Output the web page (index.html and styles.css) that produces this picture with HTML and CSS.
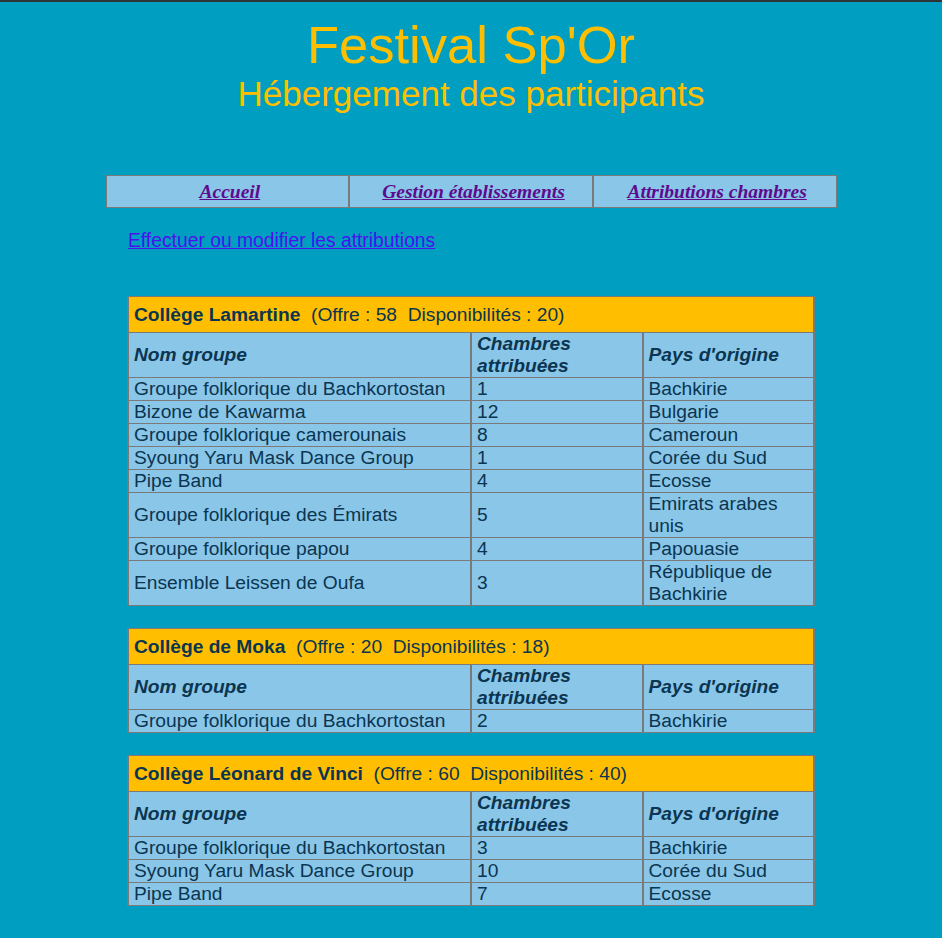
FILE: index.html
```html
<!DOCTYPE html>
<html lang="fr">
<head>
<meta charset="utf-8">
<title>Festival Sp'Or</title>
<link rel="stylesheet" href="styles.css">
</head>
<body>
<header class="entete">
  <h1 class="titre">Festival Sp'Or</h1>
  <p class="soustitre">Hébergement des participants</p>
</header>
<table class="menu">
  <tr>
    <td><a href="#">Accueil</a></td>
    <td><a href="#">Gestion établissements</a></td>
    <td><a href="#">Attributions chambres</a></td>
  </tr>
</table>
<main class="contenu">
  <p class="action"><a href="#">Effectuer ou modifier les attributions</a></p>

  <table class="etab">
    <colgroup><col class="c1"><col class="c2"><col class="c3"></colgroup>
    <tr><td colspan="3" class="nom"><strong>Collège Lamartine</strong>&nbsp;&nbsp;(Offre : 58&nbsp;&nbsp;Disponibilités : 20)</td></tr>
    <tr class="entetes"><th>Nom groupe</th><th>Chambres attribuées</th><th>Pays d'origine</th></tr>
    <tr><td>Groupe folklorique du Bachkortostan</td><td>1</td><td>Bachkirie</td></tr>
    <tr><td>Bizone de Kawarma</td><td>12</td><td>Bulgarie</td></tr>
    <tr><td>Groupe folklorique camerounais</td><td>8</td><td>Cameroun</td></tr>
    <tr><td>Syoung Yaru Mask Dance Group</td><td>1</td><td>Corée du Sud</td></tr>
    <tr><td>Pipe Band</td><td>4</td><td>Ecosse</td></tr>
    <tr><td>Groupe folklorique des Émirats</td><td>5</td><td>Emirats arabes unis</td></tr>
    <tr><td>Groupe folklorique papou</td><td>4</td><td>Papouasie</td></tr>
    <tr><td>Ensemble Leissen de Oufa</td><td>3</td><td>République de Bachkirie</td></tr>
  </table>

  <table class="etab">
    <colgroup><col class="c1"><col class="c2"><col class="c3"></colgroup>
    <tr><td colspan="3" class="nom"><strong>Collège de Moka</strong>&nbsp;&nbsp;(Offre : 20&nbsp;&nbsp;Disponibilités : 18)</td></tr>
    <tr class="entetes"><th>Nom groupe</th><th>Chambres attribuées</th><th>Pays d'origine</th></tr>
    <tr><td>Groupe folklorique du Bachkortostan</td><td>2</td><td>Bachkirie</td></tr>
  </table>

  <table class="etab">
    <colgroup><col class="c1"><col class="c2"><col class="c3"></colgroup>
    <tr><td colspan="3" class="nom"><strong>Collège Léonard de Vinci</strong>&nbsp;&nbsp;(Offre : 60&nbsp;&nbsp;Disponibilités : 40)</td></tr>
    <tr class="entetes"><th>Nom groupe</th><th>Chambres attribuées</th><th>Pays d'origine</th></tr>
    <tr><td>Groupe folklorique du Bachkortostan</td><td>3</td><td>Bachkirie</td></tr>
    <tr><td>Syoung Yaru Mask Dance Group</td><td>10</td><td>Corée du Sud</td></tr>
    <tr><td>Pipe Band</td><td>7</td><td>Ecosse</td></tr>
  </table>
</main>
</body>
</html>
```

FILE: styles.css
```css
html, body {
  margin: 0;
  padding: 0;
}
body {
  background: #009ec1;
  border-top: 2px solid #2e3436;
  font-family: "Liberation Sans", Arial, sans-serif;
  color: #0b3550;
  min-height: 936px;
}
.entete {
  text-align: center;
  color: #ffbf00;
  padding-top: 13px;
}
.titre {
  margin: 0;
  font-weight: normal;
  font-size: 52.5px;
  line-height: 60px;
}
.soustitre {
  margin: 0;
  font-size: 35px;
  line-height: 38px;
}
.menu {
  width: 731px;
  margin: 62px auto 0;
  border-collapse: separate;
  border-spacing: 0;
  table-layout: fixed;
}
.menu td {
  background: #89c6e8;
  border: 1px solid #7a7a7a;
  text-align: center;
  height: 31px;
  padding: 0 0 0 5px;
  line-height: 31px;
  font-family: "Liberation Serif", "Times New Roman", serif;
  font-weight: bold;
  font-style: italic;
  font-size: 19.5px;
}
.menu a {
  color: #5f0a8e;
}
.contenu {
  width: 688px;
  margin: 0 auto;
}
.action {
  margin: 22px 0 44px;
  padding-left: 1px;
  font-size: 19.3px;
  line-height: 22px;
}
.action a {
  color: #4a10ee;
}
.etab {
  width: 688px;
  border-collapse: collapse;
  table-layout: fixed;
  margin-bottom: 22px;
  font-size: 19.2px;
  line-height: 22px;
}
.etab .c1 { width: 50%; }
.etab .c2 { width: 25%; }
.etab .c3 { width: 25%; }
.etab td, .etab th {
  background: #89c6e8;
  border-top: 1px solid #7a7a7a;
  border-bottom: 1px solid #7a7a7a;
  border-left: 2px solid #7a7a7a;
  border-right: 2px solid #7a7a7a;
  padding: 0 5px;
  text-align: left;
  vertical-align: middle;
}
.etab .nom {
  background: #ffbf00;
  height: 35px;
  padding: 0 5px;
}
.etab th {
  font-style: italic;
  font-weight: bold;
}
```
